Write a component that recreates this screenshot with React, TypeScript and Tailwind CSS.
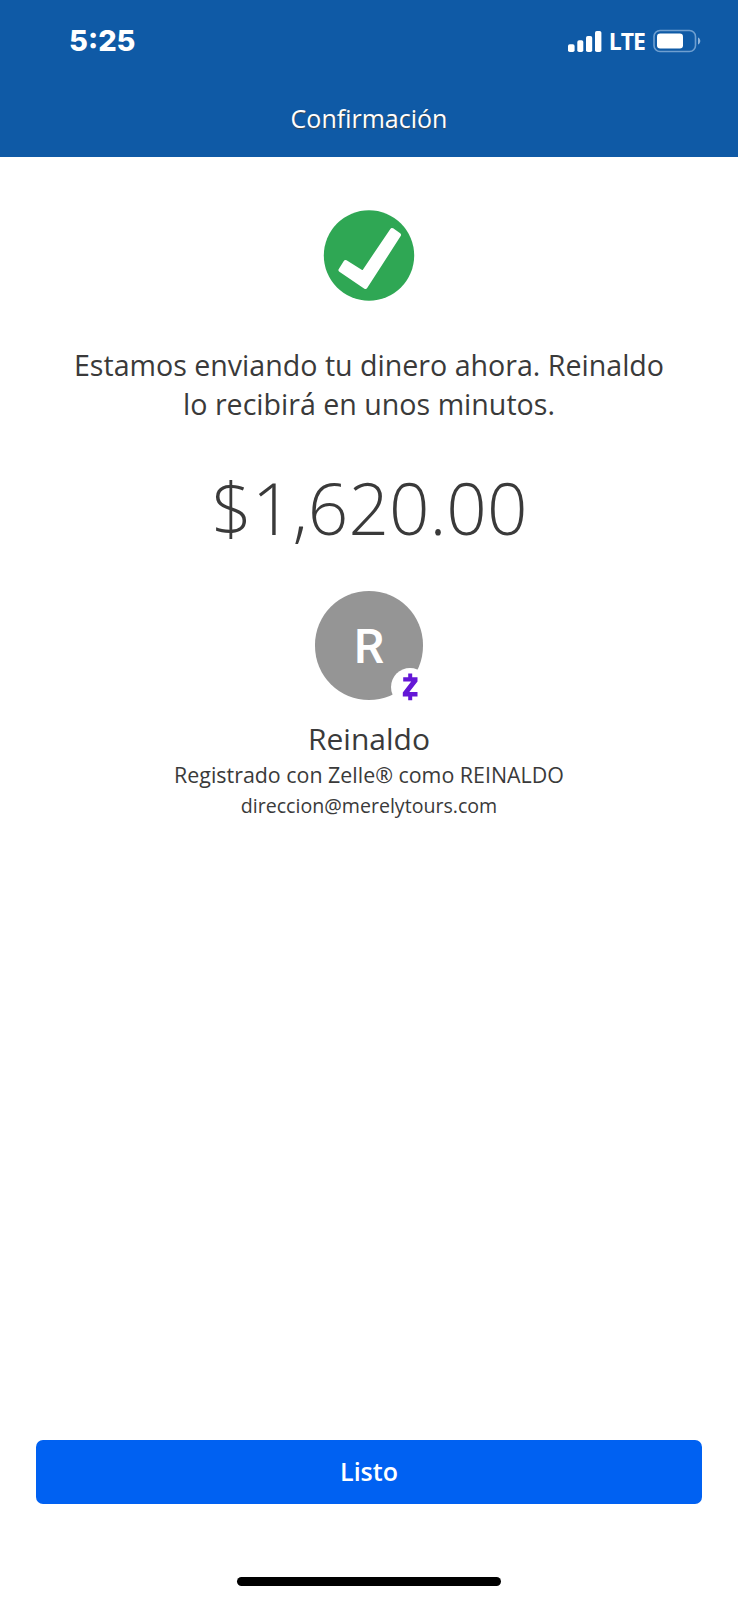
function SignalIcon() {
  return (
    <svg width="34" height="21" viewBox="0 0 34 21" fill="white">
      <rect x="0" y="13.3" width="6.6" height="7.7" rx="1.8" />
      <rect x="9.3" y="9.3" width="6" height="11.7" rx="1.8" />
      <rect x="18" y="5" width="6.2" height="16" rx="1.8" />
      <rect x="27" y="0" width="6.4" height="21" rx="1.8" />
    </svg>
  );
}

function BatteryIcon() {
  return (
    <svg width="48" height="24" viewBox="0 0 48 24" fill="none">
      <rect x="1" y="1.5" width="41.5" height="21" rx="6" stroke="#6f9fd0" strokeWidth="1.6" />
      <rect x="4" y="4.5" width="26" height="15" rx="3.2" fill="white" />
      <path d="M45 8.5c1.5.6 2.3 2 2.3 3.5s-.8 2.9-2.3 3.5z" fill="#8fb4dc" />
    </svg>
  );
}

function SuccessIcon() {
  return (
    <svg width="92" height="92" viewBox="0 0 92 92">
      <circle cx="46" cy="45.5" r="45.2" fill="#2fa754" />
      <path
        d="M22.5 52 L40 63 L69 20 L76 25 L42.500 77 L17.500 60 Z"
        fill="white"
        stroke="white"
        strokeWidth="4"
        strokeLinejoin="round"
      />
    </svg>
  );
}

function ZelleIcon() {
  return (
    <svg width="38" height="38" viewBox="0 0 38 38">
      <circle cx="19" cy="19" r="19" fill="white" />
      <path d="M17.2 5.5h4v3.700h5.300v4.300L18.3 24h8.2v4.500h-5.300v3.800h-4v-3.800h-5.400v-4L20.2 13.600h-8V9.200h5z" fill="#6417d6" />
    </svg>
  );
}

export default function App() {
  return (
    <div className="flex h-[1600px] w-[738px] flex-col bg-white font-['Open_Sans',sans-serif] text-[#3a3a3a]">
      <header className="h-[157px] bg-[#0f5aa6] text-white">
        <div className="flex h-[82px] items-center justify-between pr-[37px] pl-[69px]">
          <span className="font-['Inter',sans-serif] text-[29px] font-extrabold">5:25</span>
          <div className="flex items-center">
            <SignalIcon />
            <span className="ml-[7px] text-[23px] leading-none font-bold tracking-[-1px]">LTE</span>
            <div className="ml-2">
              <BatteryIcon />
            </div>
          </div>
        </div>
        <h1 className="text-center text-[25px] leading-[73px] [text-shadow:0_1px_1px_#444]">Confirmación</h1>
      </header>

      <main className="flex flex-1 flex-col items-center pt-[53px]">
        <SuccessIcon />
        <p className="mt-[44px] text-center text-[28.6px] leading-[38.5px]">
          Estamos enviando tu dinero ahora. Reinaldo
          <br />
          lo recibirá en unos minutos.
        </p>
        <div className="mt-[37px] pl-px text-[71px] leading-[96px] font-light">$1,620.00</div>

        <div className="relative mt-[35px] flex h-[108.5px] w-[108.5px] items-center justify-center rounded-full bg-[#959595]">
          <span className="pt-[3px] font-['Roboto',sans-serif] text-[48px] leading-none font-medium text-white">R</span>
          <div className="absolute top-[77px] left-[76.5px]">
            <ZelleIcon />
          </div>
        </div>

        <div className="mt-[19px] text-[30px] leading-[40px]">Reinaldo</div>
        <div className="text-[21.4px] leading-[32.5px]">Registrado con Zelle® como REINALDO</div>
        <div className="text-[19.6px] leading-[29px]">direccion@merelytours.com</div>
      </main>

      <footer className="flex flex-col items-center px-9 pb-[14px]">
        <button className="h-16 w-full rounded-[7px] bg-[#0061f2] text-[25px] font-semibold text-white">Listo</button>
        <div className="mt-[73px] h-[9px] w-[264px] rounded-full bg-black" />
      </footer>
    </div>
  );
}
